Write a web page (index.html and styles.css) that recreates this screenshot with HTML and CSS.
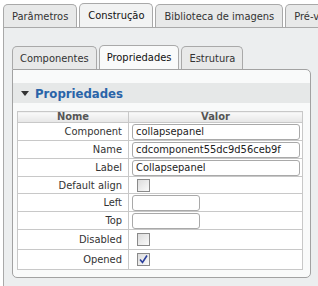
FILE: index.html
```html
<!DOCTYPE html>
<html lang="pt">
<head>
    <meta charset="UTF-8">
    <title>Construção</title>
    <link rel="stylesheet" href="styles.css">
</head>
<body>
    <div class="tabs">
        <div class="tab">Parâmetros</div>
        <div class="tab active">Construção</div>
        <div class="tab">Biblioteca de imagens</div>
        <div class="tab">Pré-visualização</div>
    </div>

    <div class="panel">
        <div class="tabs inner">
            <div class="tab">Componentes</div>
            <div class="tab active">Propriedades</div>
            <div class="tab">Estrutura</div>
        </div>

        <div class="subpanel">
            <div class="section">
                <span class="arrow"></span>
                <span class="section-title">Propriedades</span>
            </div>

            <table class="props">
                <thead>
                    <tr>
                        <th class="name-col">Nome</th>
                        <th>Valor</th>
                    </tr>
                </thead>
                <tbody>
                    <tr class="text-row">
                        <td class="label">Component</td>
                        <td><input class="field" type="text" value="collapsepanel"></td>
                    </tr>
                    <tr class="text-row">
                        <td class="label">Name</td>
                        <td><input class="field" type="text" value="cdcomponent55dc9d56ceb9f"></td>
                    </tr>
                    <tr class="text-row">
                        <td class="label">Label</td>
                        <td><input class="field" type="text" value="Collapsepanel"></td>
                    </tr>
                    <tr class="check-row">
                        <td class="label">Default align</td>
                        <td><span class="check"></span></td>
                    </tr>
                    <tr class="text-row">
                        <td class="label">Left</td>
                        <td><input class="field short" type="text" value=""></td>
                    </tr>
                    <tr class="text-row">
                        <td class="label">Top</td>
                        <td><input class="field short" type="text" value=""></td>
                    </tr>
                    <tr class="check-row tall">
                        <td class="label">Disabled</td>
                        <td><span class="check"></span></td>
                    </tr>
                    <tr class="check-row tall">
                        <td class="label">Opened</td>
                        <td>
                            <span class="check">
                                <svg width="11" height="11" viewBox="0 0 11 11">
                                    <path d="M2 5.5 L4.5 8.5 L9 1.5" fill="none" stroke="#2b3f9c" stroke-width="1.6"/>
                                </svg>
                            </span>
                        </td>
                    </tr>
                </tbody>
            </table>
        </div>
    </div>
</body>
</html>
```

FILE: styles.css
```css
body {
    margin: 0;
    padding: 0;
    background-color: #fff;
    font-family: "DejaVu Sans Condensed", "DejaVu Sans", sans-serif;
    font-size: 11px;
    color: #333;
    overflow: hidden;
}

.tabs {
    display: flex;
    gap: 2px;
    padding: 4px 0 0 3px;
    white-space: nowrap;
}

.tab {
    flex: none;
    height: 22px;
    line-height: 23px;
    padding: 0 8px;
    border: 1px solid #a9a9a9;
    border-bottom: none;
    border-radius: 5px 5px 0 0;
    background-color: #e8e9e9;
    color: #333;
}

.tab.active {
    height: 23px;
    margin-top: -1px;
    background-color: #f2f3f3;
    color: #111;
}

.panel {
    margin-left: 3px;
    border-left: 1px solid #a9a9a9;
    border-top: 1px solid #a9a9a9;
    background-color: #eceeef;
    padding: 18px 0 9px 8px;
    height: 300px;
}

.tabs.inner {
    padding: 0;
}

.tabs.inner .tab {
    padding: 0 7px;
}

.tabs.inner .tab.active {
    background-color: #f9fafa;
}

.subpanel {
    width: 297px;
    border: 1px solid #a2a2a2;
    border-radius: 0 5px 5px 5px;
    background-color: #f9fafa;
    padding: 13px 0 7px 0;
}

.section {
    display: flex;
    align-items: center;
    height: 20px;
    padding-left: 8px;
    margin-bottom: 8px;
    background-color: #e6e8e8;
}

.arrow {
    width: 0;
    height: 0;
    border-left: 4px solid transparent;
    border-right: 4px solid transparent;
    border-top: 5px solid #333;
    margin-right: 6px;
}

.section-title {
    font-size: 13px;
    font-weight: bold;
    color: #2a64a8;
}

.props {
    margin-left: 4px;
    width: 286px;
    border-collapse: collapse;
    background-color: #fff;
    border: 1px solid #c8c8c8;
}

.props th {
    height: 10px;
    padding: 0;
    font-size: 11px;
    font-weight: bold;
    line-height: 10px;
    color: #555;
    background: linear-gradient(#fafafa, #e6e6e6);
    border-left: 1px solid #c8c8c8;
    border-bottom: 1px solid #c8c8c8;
}

.props th.name-col {
    width: 110px;
    border-left: none;
}

.props td {
    padding: 0;
    border-bottom: 1px solid #c8c8c8;
    border-left: 1px solid #c8c8c8;
}

.props td.label {
    text-align: right;
    padding-right: 6px;
    border-left: none;
}

.text-row td {
    height: 17px;
}

.check-row td {
    height: 16px;
}

.check-row.tall td {
    height: 19px;
}

.field {
    display: block;
    box-sizing: border-box;
    width: 168px;
    height: 16px;
    margin-left: 3px;
    padding: 0 3px;
    border: 1px solid #a9a9a9;
    border-radius: 3px;
    font-family: "DejaVu Sans Condensed", "DejaVu Sans", sans-serif;
    font-size: 11px;
    color: #222;
    background-color: #fff;
}

.field.short {
    width: 68px;
}

.check {
    display: flex;
    align-items: center;
    justify-content: center;
    box-sizing: border-box;
    width: 13px;
    height: 13px;
    margin-left: 8px;
    border: 1px solid #8a8a8a;
    background: linear-gradient(135deg, #dcdcdc, #fafafa);
}
```
